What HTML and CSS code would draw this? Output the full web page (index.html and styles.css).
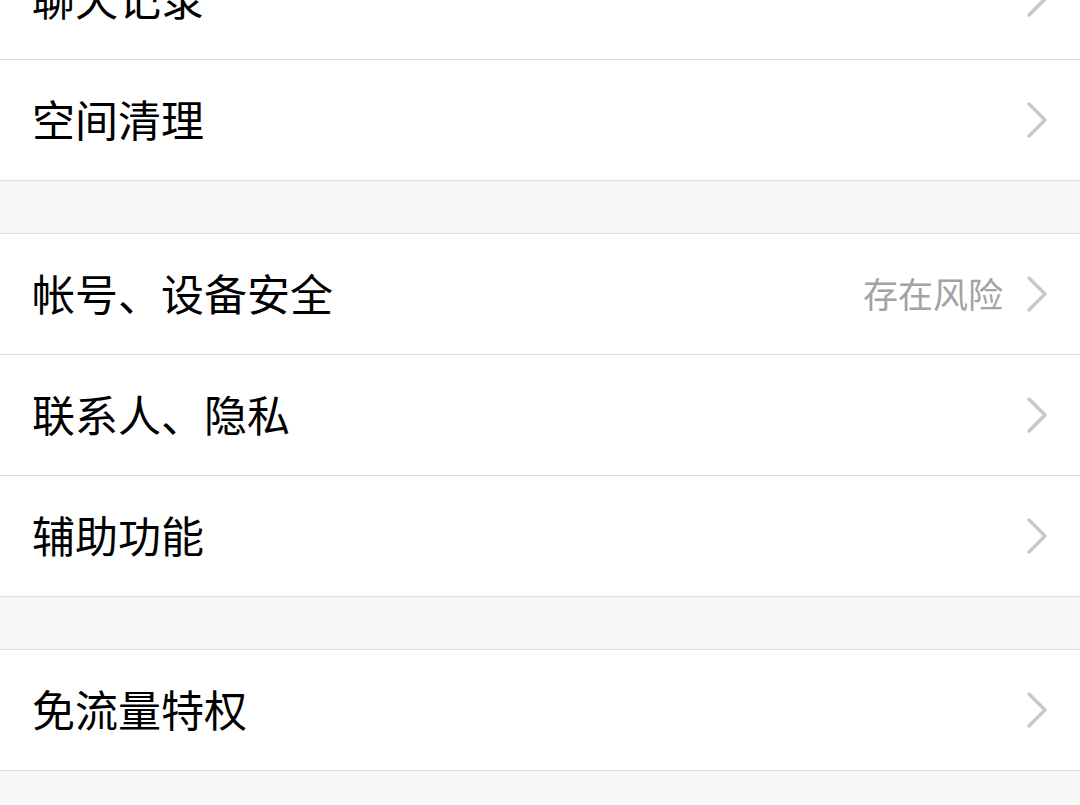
FILE: index.html
```html
<!DOCTYPE html>
<html lang="zh-CN">
<head>
<meta charset="utf-8">
<link rel="stylesheet" href="styles.css">
</head>
<body>
<div class="page">
  <div class="group first">
    <div class="row"><span class="label">聊天记录</span><svg class="chev" viewBox="0 0 24 40"><path d="M4 4 L20 20 L4 36"/></svg></div>
    <div class="row"><span class="label">空间清理</span><svg class="chev" viewBox="0 0 24 40"><path d="M4 4 L20 20 L4 36"/></svg></div>
  </div>
  <div class="group">
    <div class="row"><span class="label">帐号、设备安全</span><span class="value">存在风险</span><svg class="chev" viewBox="0 0 24 40"><path d="M4 4 L20 20 L4 36"/></svg></div>
    <div class="row"><span class="label">联系人、隐私</span><svg class="chev" viewBox="0 0 24 40"><path d="M4 4 L20 20 L4 36"/></svg></div>
    <div class="row"><span class="label">辅助功能</span><svg class="chev" viewBox="0 0 24 40"><path d="M4 4 L20 20 L4 36"/></svg></div>
  </div>
  <div class="group">
    <div class="row"><span class="label">免流量特权</span><svg class="chev" viewBox="0 0 24 40"><path d="M4 4 L20 20 L4 36"/></svg></div>
  </div>
</div>
</body>
</html>
```

FILE: styles.css
```css
html, body {
  margin: 0;
  padding: 0;
  background: #f7f7f9;
  overflow: hidden;
}
.page {
  width: 1080px;
  margin-top: -61px;
  font-family: "Noto Sans CJK SC", "Noto Sans", sans-serif;
}
.group {
  background: #fff;
  border-top: 1px solid #dcdcde;
  border-bottom: 1px solid #dcdcde;
  margin-top: 52px;
}
.group.first {
  margin-top: 0;
  border-top: none;
}
.row {
  height: 120px;
  box-sizing: border-box;
  display: flex;
  align-items: center;
  padding: 0 31px 4px 32px;
}
.row + .row {
  border-top: 1px solid #dcdcde;
  height: 121px;
}
.label {
  flex: 1;
  font-size: 43px;
  color: #000;
  line-height: 1;
}
.value {
  font-size: 35px;
  color: #a3a3a3;
  line-height: 1;
  margin-right: 22px;
}
.chev {
  width: 24px;
  height: 40px;
  flex: none;
  margin-top: 4px;
}
.chev path {
  fill: none;
  stroke: #c8c8cc;
  stroke-width: 3.5;
  stroke-linecap: round;
  stroke-linejoin: round;
}
```
